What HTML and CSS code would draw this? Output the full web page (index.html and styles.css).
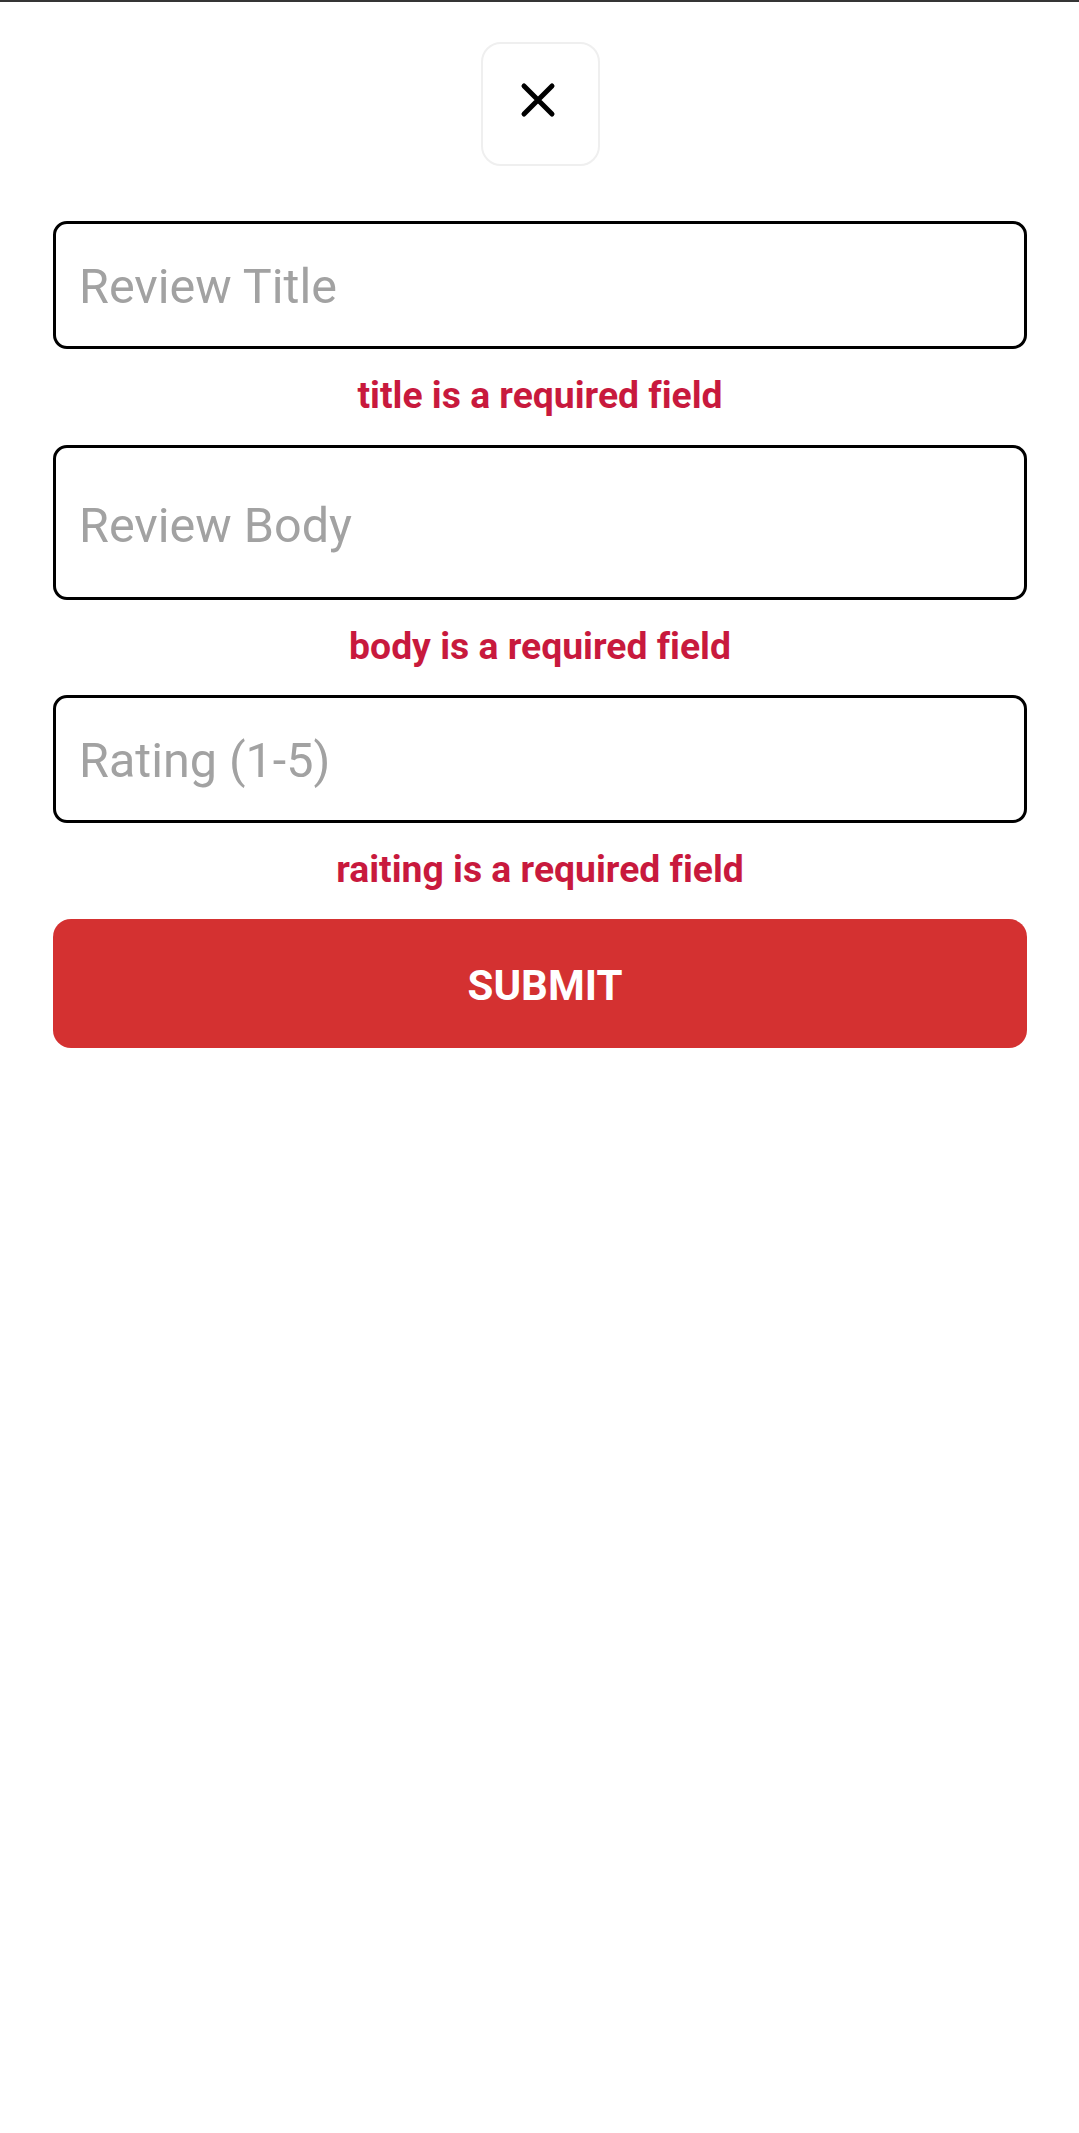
FILE: index.html
```html
<!DOCTYPE html>
<html lang="en">
<head>
<meta charset="utf-8">
<title>Review</title>
<link rel="stylesheet" href="styles.css">
</head>
<body>
<div class="topline"></div>
<main class="sheet">
  <div class="close-row">
    <button class="close-btn" type="button" aria-label="Close">
      <svg class="close-icon" width="38" height="38" viewBox="0 0 38 38">
        <path d="M5 5 L33 33 M33 5 L5 33" stroke="#000" stroke-width="5" stroke-linecap="round" fill="none"/>
      </svg>
    </button>
  </div>
  <form class="form">
    <input class="field" type="text" placeholder="Review Title">
    <p class="error">title is a required field</p>
    <input class="field field-body" type="text" placeholder="Review Body">
    <p class="error">body is a required field</p>
    <input class="field" type="text" placeholder="Rating (1-5)">
    <p class="error">raiting is a required field</p>
    <button class="submit" type="button">SUBMIT</button>
  </form>
</main>
</body>
</html>
```

FILE: styles.css
```css
html, body {
  margin: 0;
  padding: 0;
  background: #ffffff;
}
body {
  font-family: Roboto, "Noto Sans", "Liberation Sans", sans-serif;
  min-height: 2133px;
}
.topline {
  height: 2px;
  background: #353535;
}
.sheet {
  padding: 0 52px 0 53px;
}
.close-row {
  display: flex;
  justify-content: center;
  padding-top: 40px;
}
.close-btn {
  width: 119px;
  height: 124px;
  box-sizing: border-box;
  border: 2px solid #efefef;
  border-radius: 20px;
  background: #ffffff;
  display: flex;
  align-items: center;
  justify-content: center;
  padding: 0 5px 8px 0;
  margin: 0;
}
.close-icon {
  display: block;
}
.form {
  display: flex;
  flex-direction: column;
  margin-top: 55px;
}
.field {
  display: block;
  box-sizing: border-box;
  width: 100%;
  height: 128px;
  border: 3px solid #000;
  border-radius: 14px;
  padding: 3px 23px 0;
  margin: 0;
  font-family: Roboto, "Noto Sans", sans-serif;
  font-size: 48.5px;
  color: #000;
  background: #fff;
  outline: none;
}
.field-body {
  height: 155px;
  padding-top: 6px;
}
.field::placeholder {
  color: #a2a2a2;
  opacity: 1;
}
.error {
  margin: 22px 0 25.5px;
  text-align: center;
  font-family: Roboto, "Noto Sans", sans-serif;
  font-weight: 700;
  font-size: 37.3px;
  line-height: 48px;
  color: #c8193d;
  font-variant-ligatures: none;
}
.submit {
  display: block;
  width: 100%;
  height: 129px;
  border: none;
  border-radius: 18px;
  background: #d43131;
  color: #ffffff;
  font-family: Roboto, "Noto Sans", sans-serif;
  font-weight: 700;
  font-size: 42px;
  padding: 5px 0 0 10px;
  margin: 0;
}
```
